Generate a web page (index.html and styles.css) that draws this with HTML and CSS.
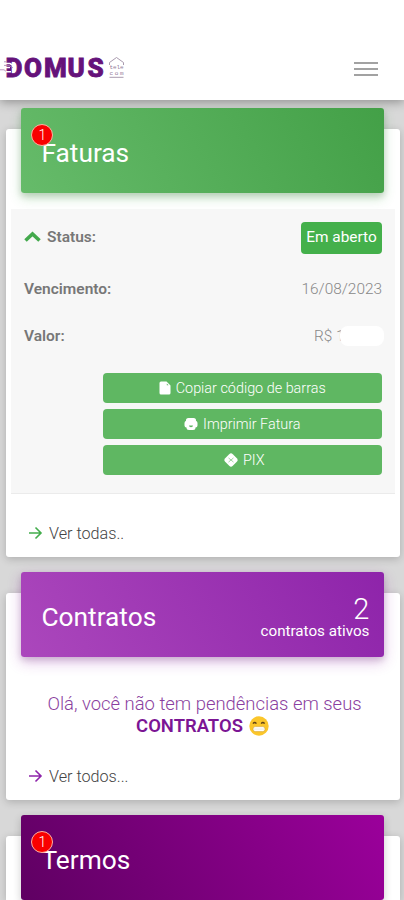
FILE: index.html
```html
<!DOCTYPE html>
<html lang="pt-BR">
<head>
<meta charset="utf-8">
<meta name="viewport" content="width=device-width, initial-scale=1">
<title>Domus Telecom</title>
<link rel="stylesheet" href="styles.css">
</head>
<body>
<header class="topbar">
  <svg class="logo" width="126" height="30" viewBox="0 0 126 30" role="img" aria-label="Domus Telecom">
    <text class="logo-name" x="5.500 24 44 67.500 87.500" y="23.800">DOMUS</text>
    <path d="M4 10.500h6l4 2.500M4 14.500h6M4 18.800h7" fill="none" stroke="#fff" stroke-width="1.600"/>
    <path d="M4 8.800h3M4 12.400h5l4 2.500M0 16.800h4l2 1.500" fill="none" stroke="#b08aba" stroke-width=".9"/>
    <path d="M109.500 12V9.500L116.500 4.500l7 5V12M109.500 24.300h14" fill="none" stroke="#a99aae" stroke-width="1"/>
    <text class="logo-small" x="109.500" y="15.500" textLength="14">tele</text>
    <text class="logo-small" x="109.500" y="21.500" textLength="14">com</text>
  </svg>
  <button class="menu" aria-label="Menu"><span></span><span></span><span></span></button>
</header>
<main class="cards">
  <section class="card card-invoices">
    <div class="banner banner-green">
      <span class="count">1</span>
      <h2>Faturas</h2>
    </div>
    <div class="invoice">
      <div class="row row-status">
        <strong class="label"><svg class="chevron" width="17" height="12" viewBox="0 0 17 12"><path d="M1.500 9.500 8.500 3l7 6.500" fill="none" stroke="#43a94c" stroke-width="3.600"/></svg><span class="status-label">Status:</span></strong>
        <span class="status">Em aberto</span>
      </div>
      <div class="row row-due"><strong class="label due-label">Vencimento:</strong><span class="value date">16/08/2023</span></div>
      <div class="row row-price"><strong class="label">Valor:</strong><span class="value price">R$ 1<span class="redacted"></span></span></div>
      <div class="actions">
        <button class="action"><svg width="12" height="14" viewBox="0 0 12 14"><path fill="#fff" fill-rule="evenodd" d="M2 .5h5.500L11.500 4.500V12a1.500 1.500 0 0 1-1.500 1.500H2A1.500 1.500 0 0 1 .5 12V2A1.500 1.500 0 0 1 2 .5zM7.800 2.500v1.800h1.800z"/></svg><span class="t-copy">Copiar código de barras</span></button>
        <button class="action"><svg width="14" height="14" viewBox="0 0 14 14"><path fill="#fff" fill-rule="evenodd" d="M4.500 1h5A2.500 2.500 0 0 1 12 3.700 2.500 2.500 0 0 1 13.500 6v2.500a2 2 0 0 1-2 2A2.500 2.500 0 0 1 9 13H5a2.500 2.500 0 0 1-2.500-2.500 2 2 0 0 1-2-2V6A2.500 2.500 0 0 1 2 3.700 2.500 2.500 0 0 1 4.500 1zM5 8.500q0 1.800 2 1.800t2-1.800z"/></svg><span class="t-print">Imprimir Fatura</span></button>
        <button class="action action-pix"><svg width="14" height="14" viewBox="0 0 14 14"><path fill="#fff" d="M5.200 1.200a2.600 2.600 0 0 1 3.600 0l4 4a2.600 2.600 0 0 1 0 3.600l-4 4a2.600 2.600 0 0 1-3.600 0l-4-4a2.600 2.600 0 0 1 0-3.600z"/><path d="M4.500 4.900 7 7l2.500-2.100M4.500 9.100 7 7l2.500 2.100" fill="none" stroke="#5fb762" stroke-width=".6"/></svg><span class="t-pix">PIX</span></button>
      </div>
    </div>
    <a class="more more-green"><svg width="15" height="14" viewBox="0 0 15 14"><path d="M1 7h12M7.500 1.500 13 7l-5.500 5.500" fill="none" stroke="currentColor" stroke-width="1.600"/></svg><span>Ver todas..</span></a>
  </section>
  <section class="card card-contracts">
    <div class="banner banner-purple">
      <h2>Contratos</h2>
      <div class="total"><span class="total-number">2</span><span class="total-label">contratos ativos</span></div>
    </div>
    <p class="message"><span class="message-line">Olá, você não tem pendências em seus</span><span class="message-strong"><strong>CONTRATOS</strong><svg width="22" height="20" viewBox="0 0 21 20"><circle cx="10.500" cy="10" r="9.700" fill="#fbc62b"/><path d="M4.500 7.600q1.700-2.200 3.400 0M12.700 7.600q1.700-2.200 3.400 0" fill="none" stroke="#614317" stroke-width="1.500"/><rect x="4.500" y="10.600" width="12" height="5" rx="2.300" fill="#fff" stroke="#d5a52f" stroke-width=".6"/><path d="M5 13.100h11" stroke="#d9d5c8" stroke-width=".5"/></svg></span></p>
    <a class="more more-purple"><svg width="15" height="14" viewBox="0 0 15 14"><path d="M1 7h12M7.500 1.500 13 7l-5.500 5.500" fill="none" stroke="currentColor" stroke-width="1.600"/></svg><span class="more-text">Ver todos...</span></a>
  </section>
  <section class="card card-terms">
    <div class="banner banner-dark">
      <span class="count">1</span>
      <h2>Termos</h2>
    </div>
  </section>
</main>
</body>
</html>
```
FILE: styles.css
```css
* { box-sizing: border-box; }
html, body { height: 900px; overflow: hidden; }
body {
  margin: 0;
  background: #d8d8d8;
  font-family: Roboto, "Liberation Sans", sans-serif;
  font-weight: 300;
  font-size: 16px;
  color: #444;
}
button { border: 0; padding: 0; font: inherit; }
svg { flex: none; }
.topbar {
  position: relative;
  display: flex;
  justify-content: space-between;
  height: 100px;
  padding: 53px 26px 0 0;
  background: #fff;
  box-shadow: 0 2px 10px rgba(0, 0, 0, .35);
}
.logo { display: block; }
.logo-name { font: 800 26px Roboto, sans-serif; fill: #65127a; stroke: #65127a; stroke-width: .9px; }
.logo-small { font: 500 6px "Liberation Mono", monospace; fill: #917a99; }
.menu {
  display: flex;
  flex-direction: column;
  gap: 4px;
  width: 24px;
  height: 14px;
  margin-top: 9px;
  background: none;
}
.menu span { height: 2.500px; width: 24px; background: #a2a2a2; }
.cards { height: 800px; overflow: hidden; padding: 29px 4px 0 6px; }
.card {
  height: 207px;
  margin-bottom: 36px;
  padding: 0 5px;
  background: #fff;
  border-radius: 3px;
  box-shadow: 0 2px 8px rgba(0, 0, 0, .2);
}
.card-invoices { height: 428px; }
.card-terms { height: 64px; margin-bottom: 0; border-radius: 3px 3px 0 0; }
.banner {
  position: relative;
  top: -21px;
  display: flex;
  justify-content: space-between;
  height: 85px;
  margin: 0 10.400px;
  width: 363px;
  padding: 0 15px 0 20px;
  border-radius: 3px;
  color: #fff;
}
.banner h2 { margin: 28px 0 0; font-size: 26.300px; line-height: 34px; font-weight: 400; color: #fff; }
.banner-green { background: linear-gradient(60deg, #66bb6a, #43a047); box-shadow: 0 5px 12px rgba(76, 175, 80, .3), 0 3px 6px rgba(0, 0, 0, .15); }
.banner-purple { background: linear-gradient(60deg, #ab47bc, #8e24aa); box-shadow: 0 5px 14px rgba(156, 39, 176, .3), 0 3px 6px rgba(0, 0, 0, .15); }
.banner-dark { background: linear-gradient(60deg, #5f0062, #9b009b); box-shadow: 0 3px 8px rgba(0, 0, 0, .2); }
.count {
  position: absolute;
  left: 10px;
  top: 16px;
  width: 22px;
  height: 22px;
  border: 1px solid #ffb0a0;
  border-radius: 50%;
  background: #f90000;
  font-size: 14px;
  line-height: 20px;
  text-align: center;
}
.invoice {
  height: 285px;
  margin-top: -5px;
  padding: 13px 13px 0;
  background: #f7f7f7;
  border-bottom: 1px solid #ebebeb;
}
.row { display: flex; justify-content: space-between; align-items: center; height: 47px; }
.row-status { height: 32px; margin-bottom: 12px; }
.label { display: flex; align-items: center; gap: 6px; font-size: 15.500px; font-weight: 600; color: #777; }
.row-status .label { margin-top: -2px; }
.status { width: 81px; height: 32px; border-radius: 4px; background: #44b04b; color: #fff; font-size: 15.400px; font-weight: 400; line-height: 31px; text-align: center; }
.value { font-size: 15.400px; color: #888; }
.row-due, .row-price { position: relative; top: -.5px; }
.price { display: flex; align-items: center; width: 68px; white-space: pre; }
.redacted { position: relative; width: 44px; height: 20px; margin: 0 -4px 0 -5px; border-radius: 8px; background: #fff; flex: none; }
.actions { display: flex; flex-direction: column; gap: 6px; width: 279.500px; margin: 13px 0 0 auto; }
.action {
  display: flex;
  align-items: center;
  justify-content: center;
  gap: 5px;
  height: 30px;
  border-radius: 4px;
  background: #5fb762;
  color: #fff;
  font-weight: 350;
  font-size: 14.400px;
}
.action-pix { padding-left: 4px; }
.more { display: flex; align-items: center; gap: 6px; height: 20px; margin: 29px 0 0 17px; color: #444; white-space: nowrap; }
.more span { color: #444; font-size: 16.200px; }
.more-green { color: #43ad4c; }
.more-purple { margin-top: 29px; color: #8e24aa; }
.total { display: flex; flex-direction: column; align-items: flex-end; padding-top: 21px; }
.total-number { font-size: 29px; line-height: 32px; }
.total-label { font-size: 15.200px; line-height: 12px; font-weight: 400; }
.message { margin: 15px 0 0; text-align: center; color: #8b3fa0; font-size: 18.450px; line-height: 22px; white-space: nowrap; }
.message-line { display: block; margin-left: 3px; }
.message-strong { display: flex; justify-content: center; align-items: center; gap: 5px; }
.message strong { font-weight: 600; color: #7b1594; }
```
